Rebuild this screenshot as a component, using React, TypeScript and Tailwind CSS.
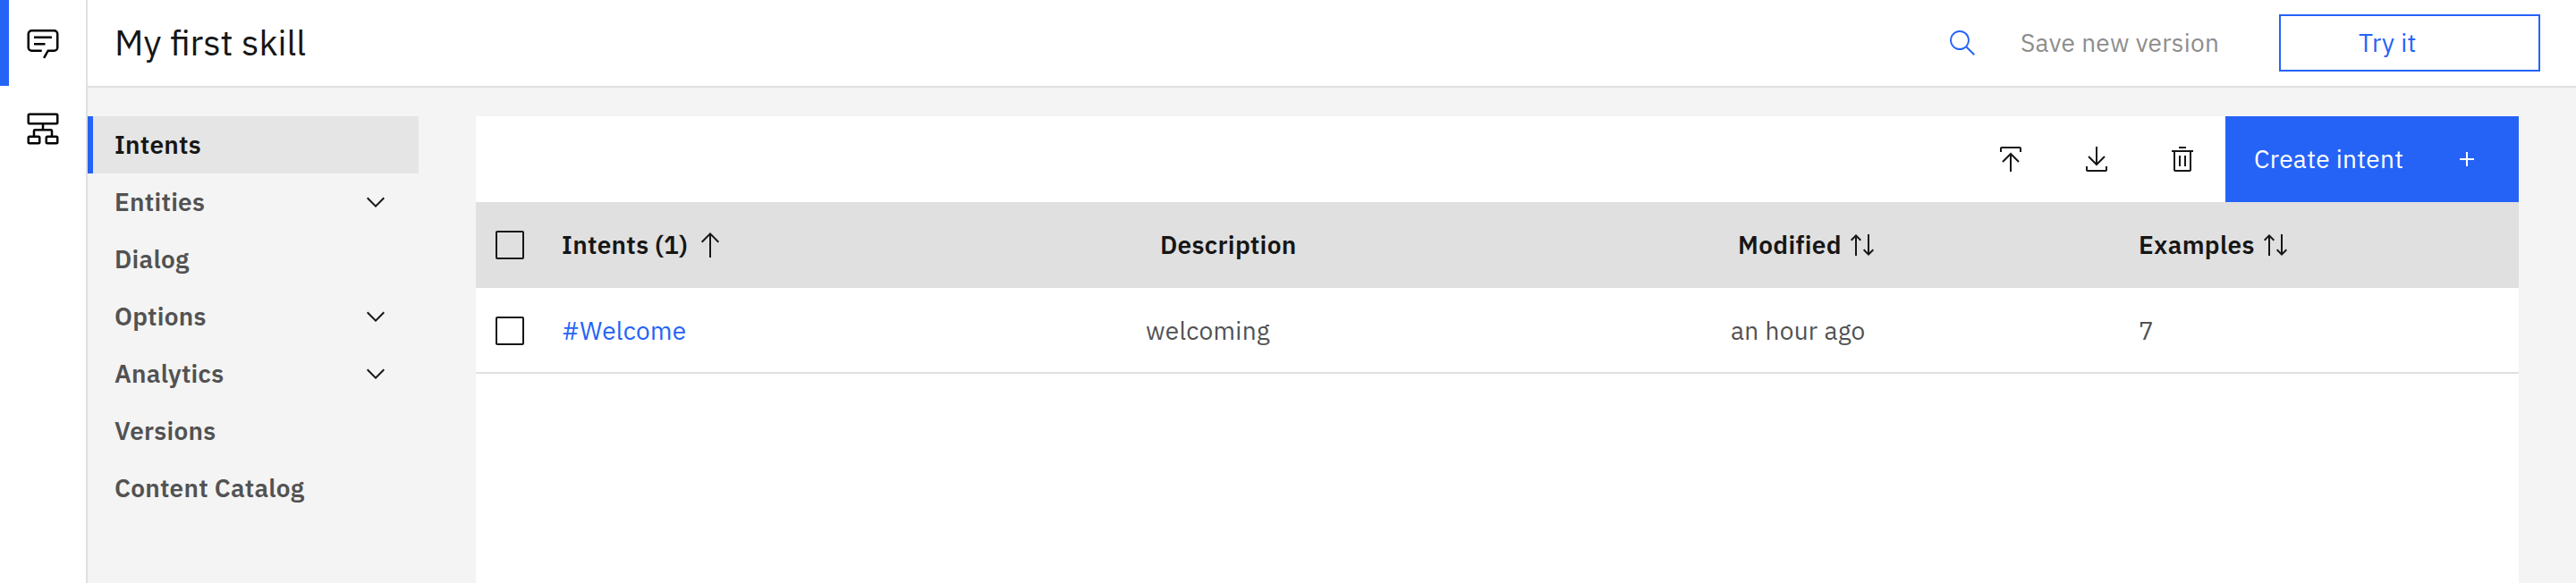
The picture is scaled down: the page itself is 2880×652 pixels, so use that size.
import type { ReactNode } from 'react';

type NavItem = { label: string; expandable?: boolean; active?: boolean };

const navItems: NavItem[] = [
  { label: 'Intents', active: true },
  { label: 'Entities', expandable: true },
  { label: 'Dialog' },
  { label: 'Options', expandable: true },
  { label: 'Analytics', expandable: true },
  { label: 'Versions' },
  { label: 'Content Catalog' },
];

const intents = [
  { name: '#Welcome', description: 'welcoming', modified: 'an hour ago', examples: 7 },
];

function ChatIcon() {
  return (
    <svg viewBox="0 0 32 32" className="size-10 fill-black">
      <path d="M17.74 30 16 29l4-7h6a2 2 0 0 0 2-2V8a2 2 0 0 0-2-2H6a2 2 0 0 0-2 2v12a2 2 0 0 0 2 2h9v2H6a4 4 0 0 1-4-4V8a4 4 0 0 1 4-4h20a4 4 0 0 1 4 4v12a4 4 0 0 1-4 4h-4.84Z" />
      <path d="M8 10h16v2H8zM8 16h10v2H8z" />
    </svg>
  );
}

function FlowIcon() {
  return (
    <svg viewBox="0 0 32 32" className="size-10 fill-none stroke-black stroke-2">
      <rect x="3" y="3" width="26" height="8.4" rx="1" />
      <path d="M16 11v6M8 23v-5a1 1 0 0 1 1-1h14a1 1 0 0 1 1 1v5" />
      <rect x="3" y="23" width="10" height="6" rx="1" />
      <rect x="19" y="23" width="10" height="6" rx="1" />
    </svg>
  );
}

function ChevronDown() {
  return (
    <svg viewBox="0 0 16 16" className="size-8 fill-[#161616]">
      <path d="M8 11 3 6l.7-.7L8 9.6l4.3-4.3.7.7z" />
    </svg>
  );
}

function SearchIcon() {
  return (
    <svg viewBox="0 0 16 16" className="size-8 fill-[#2563f6]">
      <path d="M15 14.3 10.7 10c1.9-2.3 1.6-5.8-.7-7.7S4.2.7 2.3 3 .7 8.8 3 10.7c2 1.7 5 1.7 7 0l4.3 4.3zM2 6.5C2 4 4 2 6.5 2S11 4 11 6.5 9 11 6.5 11 2 9 2 6.5z" />
    </svg>
  );
}

function UploadIcon() {
  return (
    <svg viewBox="0 0 32 32" className="size-8 fill-none stroke-[#161616] stroke-2">
      <path d="M5 8V4a1 1 0 0 1 1-1h20a1 1 0 0 1 1 1v4M16 30V10M7 19l9-9 9 9" />
    </svg>
  );
}

function DownloadIcon() {
  return (
    <svg viewBox="0 0 32 32" className="size-8 fill-none stroke-[#161616] stroke-2">
      <path d="M5 24v4a1 1 0 0 0 1 1h20a1 1 0 0 0 1-1v-4M16 2v20M7 13l9 9 9-9" />
    </svg>
  );
}

function TrashIcon() {
  return (
    <svg viewBox="0 0 32 32" className="size-8 fill-[#161616]">
      <path d="M12 12h2v12h-2zM18 12h2v12h-2zM12 2h8v2h-8z" />
      <path d="M4 6v2h2v20a2 2 0 0 0 2 2h16a2 2 0 0 0 2-2V8h2V6Zm4 22V8h16v20Z" />
    </svg>
  );
}

function ArrowUp() {
  return (
    <svg viewBox="0 0 32 32" className="size-8 fill-none stroke-[#161616] stroke-2">
      <path d="M16 30V3.4M6.7 12.7 16 3.4l9.3 9.3" />
    </svg>
  );
}

function SortArrows() {
  return (
    <svg viewBox="0 0 32 32" className="size-8 fill-none stroke-[#161616] stroke-2">
      <path d="M9 28V5.4M3.7 10.7 9 5.4l5.3 5.3M23 4v22.6M17.7 21.3l5.3 5.3 5.3-5.3" />
    </svg>
  );
}

function Checkbox() {
  return <span className="ml-[22px] size-8 rounded-[2px] border-2 border-[#161616]" />;
}

function HeaderCell({ className = '', children }: { className?: string; children: ReactNode }) {
  return <div className={`flex items-center ${className}`}>{children}</div>;
}

const columns = 'grid grid-cols-[96px_653px_654px_456px_1fr] items-center';

export default function App() {
  return (
    <div className="flex h-[652px] w-[2880px] overflow-hidden bg-[#f4f4f4] font-['IBM_Plex_Sans',Roboto,sans-serif] text-[28px] leading-9 tracking-[0.32px] text-[#161616]">
      <aside className="flex w-[98px] shrink-0 flex-col border-r-2 border-[#e0e0e0] bg-white">
        <button className="flex h-24 items-center border-l-[10px] border-[#2563f6] pl-[18px]">
          <ChatIcon />
        </button>
        <button className="flex h-24 items-center pl-7">
          <FlowIcon />
        </button>
      </aside>

      <div className="flex grow flex-col">
        <header className="flex h-[98px] shrink-0 items-center border-b-2 border-[#e0e0e0] bg-white pr-10 pl-[30px]">
          <h1 className="grow pb-0.5 text-[40px] leading-[52px] tracking-normal">My first skill</h1>
          <SearchIcon />
          <span className="ml-[49px] w-[289px] text-[#8d8d8d]">Save new version</span>
          <button className="h-16 w-[292px] border-2 border-[#2563f6] pl-[87px] text-left text-[#2563f6]">
            Try it
          </button>
        </header>

        <div className="flex grow pt-8 pr-16">
          <nav className="mr-16 w-[370px] shrink-0 tracking-[0.25px]">
            {navItems.map((item) => (
              <a
                key={item.label}
                className={`flex h-16 items-center justify-between border-l-[6px] pr-8 pl-6 font-semibold ${
                  item.active
                    ? 'border-[#2563f6] bg-[#e5e5e5] text-[#161616]'
                    : 'border-transparent text-[#525252]'
                }`}
              >
                {item.label}
                {item.expandable && <ChevronDown />}
              </a>
            ))}
          </nav>

          <main className="grow bg-white">
            <div className="flex h-24 items-center justify-end">
              <div className="mr-8 flex gap-16">
                <UploadIcon />
                <DownloadIcon />
                <TrashIcon />
              </div>
              <button className="flex h-24 w-[328px] items-center justify-between bg-[#2563f6] pr-[42px] pl-8 text-white">
                Create intent
                <svg viewBox="0 0 32 32" className="size-8 fill-white">
                  <path d="M17 15V8h-2v7H8v2h7v7h2v-7h7v-2z" />
                </svg>
              </button>
            </div>

            <div className={`${columns} h-24 bg-[#e0e0e0] font-semibold`}>
              <Checkbox />
              <HeaderCell className="gap-[9px]">
                Intents (1)
                <ArrowUp />
              </HeaderCell>
              <HeaderCell className="pl-4">Description</HeaderCell>
              <HeaderCell className="gap-[7px] pl-2">
                Modified
                <SortArrows />
              </HeaderCell>
              <HeaderCell className="gap-[7px]">
                Examples
                <SortArrows />
              </HeaderCell>
            </div>

            {intents.map((intent) => (
              <div
                key={intent.name}
                className={`${columns} h-24 border-b-2 border-[#e0e0e0] pt-0.5 text-[#525252]`}
              >
                <Checkbox />
                <a className="text-[#2563f6]">{intent.name}</a>
                <span>{intent.description}</span>
                <span>{intent.modified}</span>
                <span>{intent.examples}</span>
              </div>
            ))}
          </main>
        </div>
      </div>
    </div>
  );
}
